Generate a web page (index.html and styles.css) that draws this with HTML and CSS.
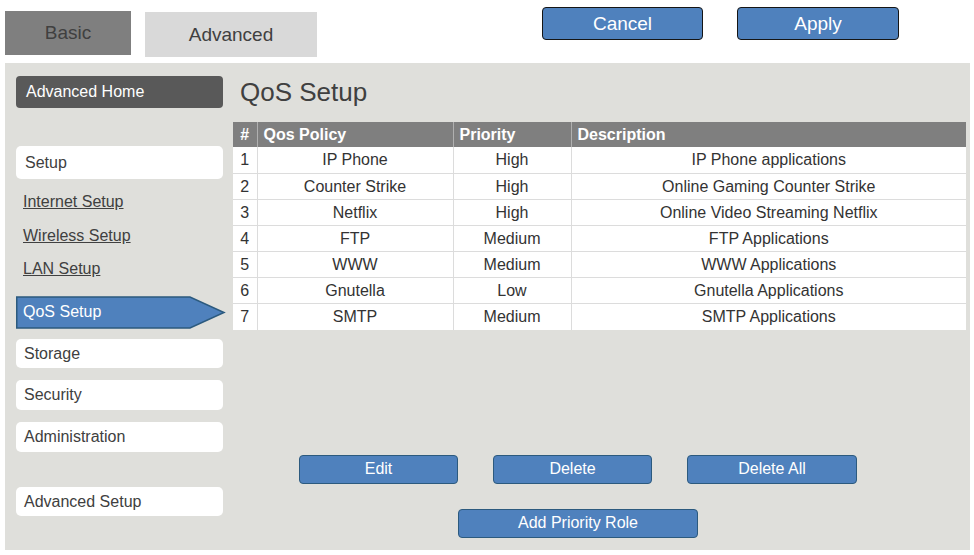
FILE: index.html
```html
<!DOCTYPE html>
<html>
<head>
<meta charset="utf-8">
<link rel="stylesheet" href="styles.css">
</head>
<body>
<div class="topbar">
  <div class="tab tab-basic">Basic</div>
  <div class="tab tab-adv">Advanced</div>
  <button class="topbtn btn-cancel">Cancel</button>
  <button class="topbtn btn-apply">Apply</button>
</div>
<div class="panel">
  <nav class="sidebar">
    <div class="side-home">Advanced Home</div>
    <div class="side-item side-setup">Setup</div>
    <a class="side-link link-internet">Internet Setup</a>
    <a class="side-link link-wireless">Wireless Setup</a>
    <a class="side-link link-lan">LAN Setup</a>
    <div class="side-qos">
      <svg class="qos-arrow" width="210" height="33" viewBox="0 0 210 33">
        <polygon points="0.75,1 174,1 208,16.5 174,32 0.75,32" fill="#4f81bd" stroke="#2c5a7e" stroke-width="1.5"/>
      </svg>
      <span class="qos-label">QoS Setup</span>
    </div>
    <div class="side-item side-storage">Storage</div>
    <div class="side-item side-security">Security</div>
    <div class="side-item side-admin">Administration</div>
    <div class="side-item side-advsetup">Advanced Setup</div>
  </nav>
  <main class="content">
    <h1 class="title">QoS Setup</h1>
    <table class="qos-table">
      <thead>
        <tr><th class="c-num">#</th><th class="c-pol">Qos Policy</th><th class="c-pri">Priority</th><th class="c-desc">Description</th></tr>
      </thead>
      <tbody>
        <tr><td class="c-num">1</td><td>IP Phone</td><td>High</td><td>IP Phone applications</td></tr>
        <tr><td class="c-num">2</td><td>Counter Strike</td><td>High</td><td>Online Gaming Counter Strike</td></tr>
        <tr><td class="c-num">3</td><td>Netflix</td><td>High</td><td>Online Video Streaming Netflix</td></tr>
        <tr><td class="c-num">4</td><td>FTP</td><td>Medium</td><td>FTP Applications</td></tr>
        <tr><td class="c-num">5</td><td>WWW</td><td>Medium</td><td>WWW Applications</td></tr>
        <tr><td class="c-num">6</td><td>Gnutella</td><td>Low</td><td>Gnutella Applications</td></tr>
        <tr><td class="c-num">7</td><td>SMTP</td><td>Medium</td><td>SMTP Applications</td></tr>
      </tbody>
    </table>
    <div class="actions">
      <button class="act btn-edit">Edit</button>
      <button class="act btn-delete">Delete</button>
      <button class="act btn-delall">Delete All</button>
    </div>
    <div class="actions2">
      <button class="act btn-add">Add Priority Role</button>
    </div>
  </main>
</div>
</body>
</html>
```
FILE: styles.css
```css
html, body {
  margin: 0;
  padding: 0;
  background: #ffffff;
  font-family: "Liberation Sans", Arial, sans-serif;
  color: #404040;
}

.topbar {
  position: relative;
  height: 63px;
}

.tab {
  position: absolute;
  box-sizing: border-box;
  display: flex;
  align-items: center;
  justify-content: center;
  font-size: 19px;
  color: #404040;
}
.tab-basic {
  left: 5px;
  top: 11px;
  width: 126px;
  height: 44px;
  background: #7f7f7f;
}
.tab-adv {
  left: 145px;
  top: 12px;
  width: 172px;
  height: 45px;
  background: #d9d9d9;
}

.topbtn {
  position: absolute;
  top: 7px;
  height: 33px;
  box-sizing: border-box;
  background: #4f81bd;
  border: 1.5px solid #151515;
  border-radius: 4px;
  color: #ffffff;
  font-family: "Liberation Sans", Arial, sans-serif;
  font-size: 19px;
  padding: 0;
}
.btn-cancel { left: 542px; width: 161px; }
.btn-apply { left: 737px; width: 162px; }

.panel {
  margin-left: 5px;
  width: 965px;
  height: 487px;
  background: #dfdfdb;
  display: flex;
}

.sidebar {
  width: 207px;
  margin-left: 11px;
  padding-top: 13px;
  display: flex;
  flex-direction: column;
  font-size: 16px;
}

.side-home {
  height: 32px;
  box-sizing: border-box;
  background: #595959;
  color: #ffffff;
  border-radius: 4px;
  padding-left: 10px;
  display: flex;
  align-items: center;
  font-size: 16px;
}

.side-item {
  box-sizing: border-box;
  background: #ffffff;
  border-radius: 5px;
  padding-left: 8px;
  display: flex;
  align-items: center;
  color: #404040;
}
.side-setup { margin-top: 38px; height: 33px; padding-left: 9px; }
.side-storage { margin-top: 10px; height: 29px; }
.side-security { margin-top: 12px; height: 30px; }
.side-admin { margin-top: 12px; height: 30px; }
.side-advsetup { margin-top: 35px; height: 29px; }

.side-link {
  display: block;
  height: 22px;
  line-height: 22px;
  padding-left: 7px;
  color: #404040;
  text-decoration: underline;
  text-decoration-color: #404040;
  font-size: 16px;
}
.link-internet { margin-top: 12px; }
.link-wireless { margin-top: 12px; }
.link-lan { margin-top: 11px; }

.side-qos {
  position: relative;
  margin-top: 16px;
  height: 33px;
  width: 210px;
}
.qos-arrow {
  position: absolute;
  left: 0;
  top: 0;
}
.qos-label {
  position: absolute;
  left: 7px;
  top: 0;
  line-height: 31px;
  color: #ffffff;
  font-size: 16px;
}

.content {
  margin-left: 10px;
  width: 733px;
  display: flex;
  flex-direction: column;
}

.title {
  margin: 14px 0 0 7px;
  font-size: 26px;
  font-weight: normal;
  line-height: 30px;
  color: #404040;
}

.qos-table {
  margin-top: 15px;
  width: 733px;
  border-collapse: collapse;
  background: #ffffff;
  font-size: 16px;
  color: #333333;
}
.qos-table th {
  background: #7f7f7f;
  color: #ffffff;
  font-weight: bold;
  text-align: left;
  height: 25px;
  padding: 0 6px;
  border-left: 1px solid #b0b0b0;
  box-sizing: border-box;
}
.qos-table th:first-child { border-left: none; }
.qos-table td {
  height: 26px;
  padding: 1px 0 0 0;
  text-align: center;
  border-top: 1px solid #dcdcdc;
  border-left: 1px solid #dcdcdc;
  box-sizing: border-box;
}
.qos-table td:first-child { border-left: none; }
.qos-table tbody tr:first-child td { border-top: none; }
.qos-table tbody tr:last-child td { height: 27px; }
.qos-table .c-num { width: 24px; text-align: center; padding: 0; }
.qos-table td.c-num { padding-top: 1px; }
.qos-table .c-pol { width: 196px; }
.qos-table .c-pri { width: 118px; }

.actions {
  margin-top: 125px;
  margin-left: 66px;
  display: flex;
  gap: 35px;
}
.actions2 {
  margin-top: 25px;
  margin-left: 225px;
  display: flex;
}

.act {
  height: 29px;
  box-sizing: border-box;
  background: #4f81bd;
  border: 1.5px solid #2c5a7e;
  border-radius: 4px;
  color: #ffffff;
  font-family: "Liberation Sans", Arial, sans-serif;
  font-size: 16px;
  padding: 0 0 2px 0;
}
.btn-edit { width: 159px; }
.btn-delete { width: 159px; }
.btn-delall { width: 170px; }
.btn-add { width: 240px; }
```
